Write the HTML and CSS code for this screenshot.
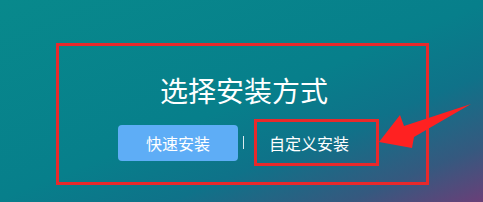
FILE: index.html
```html
<!DOCTYPE html>
<html lang="zh-CN">
<head>
    <meta charset="UTF-8">
    <meta name="viewport" content="width=device-width, initial-scale=1.0">
    <title>选择安装方式</title>
    <link rel="stylesheet" href="styles.css">
</head>
<body>
    <div class="stage">
        <div class="panel">
            <h1 class="title">选择安装方式</h1>
            <div class="choices">
                <button class="btn-quick">快速安装</button>
                <span class="divider"></span>
                <button class="btn-custom">自定义安装</button>
            </div>
        </div>

        <!-- annotation arrow pointing at the custom install button -->
        <svg class="arrow" width="483" height="202" viewBox="0 0 483 202">
            <polygon points="379,142 400,115 404,126 471,104 414,137 412,148" fill="#ff2121"/>
        </svg>
    </div>
</body>
</html>
```

FILE: styles.css
```css
html, body {
    margin: 0;
    padding: 0;
}
body {
    width: 483px;
    height: 202px;
    overflow: hidden;
    font-family: "Noto Sans CJK SC", "Noto Sans", sans-serif;
    color: white;
    background: linear-gradient(158deg, #08898c 0%, #077f8b 50%, #0f7289 68%, #35597f 86%, #6a3f78 100%);
}
.stage {
    position: relative;
    height: 202px;
    padding: 43px 0 0 56px;
    box-sizing: border-box;
}
.panel {
    width: 373px;
    height: 142px;
    box-sizing: border-box;
    border: 3px solid #e8292b;
    display: flex;
    flex-direction: column;
}
.title {
    margin: 27px 0 0;
    font-size: 28px;
    font-weight: normal;
    line-height: 34px;
    text-align: center;
    padding-left: 3px;
}
.choices {
    display: flex;
    align-items: center;
    margin-top: 12px;
    padding-left: 59px;
}
button {
    font-family: inherit;
    color: white;
    font-size: 16px;
    cursor: pointer;
}
.btn-quick {
    width: 120px;
    height: 36px;
    background: #5eadf6;
    border: none;
    border-radius: 4px;
    padding: 0;
}
.divider {
    width: 1px;
    height: 13px;
    background: rgba(255, 255, 255, 0.85);
    margin: 0 10px 0 5px;
}
.btn-custom {
    width: 125px;
    height: 47px;
    box-sizing: border-box;
    background: transparent;
    border: 3px solid #e8292b;
    padding: 0 0 0 12px;
    text-align: left;
}
.arrow {
    position: absolute;
    left: 0;
    top: 0;
    pointer-events: none;
}
```
